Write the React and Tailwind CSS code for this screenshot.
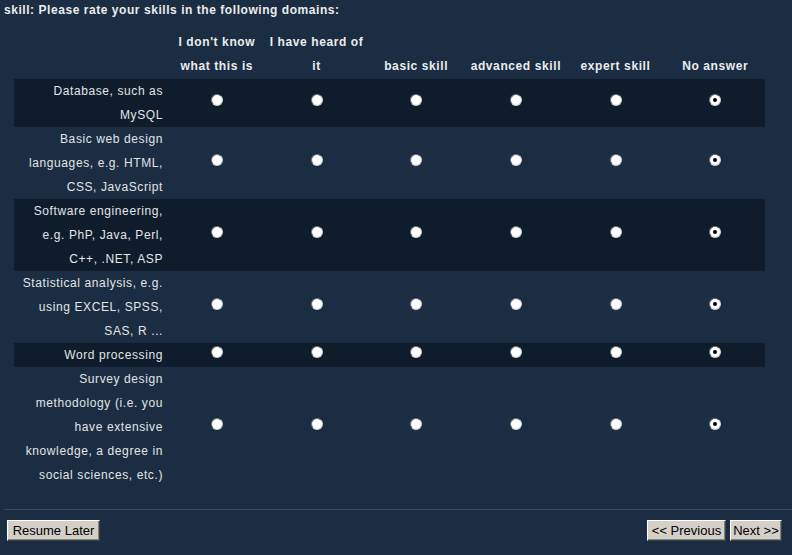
const COLUMNS = [
  ["I don't know", 'what this is'],
  ['I have heard of', 'it'],
  ['basic skill'],
  ['advanced skill'],
  ['expert skill'],
  ['No answer'],
];

const QUESTIONS = [
  { lines: ['Database, such as', 'MySQL'], dark: true },
  { lines: ['Basic web design', 'languages, e.g. HTML,', 'CSS, JavaScript'], dark: false },
  { lines: ['Software engineering,', 'e.g. PhP, Java, Perl,', 'C++, .NET, ASP'], dark: true },
  { lines: ['Statistical analysis, e.g.', 'using EXCEL, SPSS,', 'SAS, R ...'], dark: false },
  { lines: ['Word processing'], dark: true },
  {
    lines: ['Survey design', 'methodology (i.e. you', 'have extensive', 'knowledge, a degree in', 'social sciences, etc.)'],
    dark: false,
  },
];

function Radio({ checked }) {
  return (
    <span className="mb-[6px] flex h-[12px] w-[12px] items-center justify-center rounded-full border border-[#6e6e6e] border-b-[#c8c8c8] border-r-[#c8c8c8] bg-white">
      {checked && <span className="h-[4px] w-[4px] rounded-full bg-black" />}
    </span>
  );
}

function Button({ children, className }) {
  return (
    <button
      className={
        'flex h-[21px] items-center justify-center border border-t-white border-l-white border-r-[#404040] border-b-[#404040] bg-[#d4d0c8] text-[13px] leading-none text-black shadow-[inset_-1px_-1px_0_#808080] ' +
        className
      }
    >
      {children}
    </button>
  );
}

export default function App() {
  return (
    <div
      className="min-h-[555px] w-full bg-[#1b2d42] text-[12px] text-[#e4e4e4]"
      style={{ fontFamily: '"Liberation Sans", Arial, sans-serif' }}
    >
      <div className="h-[20px] pl-[4px] pt-[1px] font-bold leading-[18px] tracking-[0.55px] text-[#ececec]">
        skill: Please rate your skills in the following domains:
      </div>

      <div className="ml-[14px] mt-[10px] w-[751px]">
        <div className="flex font-bold tracking-[0.6px] text-[#ececec]">
          <div className="w-[153px] shrink-0" />
          {COLUMNS.map((lines, i) => (
            <div key={i} className="flex flex-1 flex-col justify-end text-center leading-[24px]">
              {lines.map((l) => (
                <div key={l} className="whitespace-nowrap">{l}</div>
              ))}
            </div>
          ))}
        </div>

        <div className="mt-[1px]">
          {QUESTIONS.map((q, r) => (
            <div key={r} className={'flex ' + (q.dark ? 'bg-[#0e1c2c]' : '')}>
              <div className="w-[153px] shrink-0 pr-[4px] text-right leading-[24px] tracking-[0.6px]">
                {q.lines.map((l) => (
                  <div key={l} className="whitespace-nowrap">{l}</div>
                ))}
              </div>
              {COLUMNS.map((_, i) => (
                <div key={i} className="flex flex-1 items-center justify-center">
                  <Radio checked={i === 5} />
                </div>
              ))}
            </div>
          ))}
        </div>
      </div>

      <div className="ml-[4px] mt-[22px] h-px bg-[#3a4b5d]" />

      <div className="flex items-center justify-between pl-[7px] pr-[10px] pt-[10px]">
        <Button className="w-[93px]">Resume Later</Button>
        <div className="flex gap-[4px]">
          <Button className="w-[79px]">&lt;&lt; Previous</Button>
          <Button className="w-[52px]">Next &gt;&gt;</Button>
        </div>
      </div>
    </div>
  );
}
